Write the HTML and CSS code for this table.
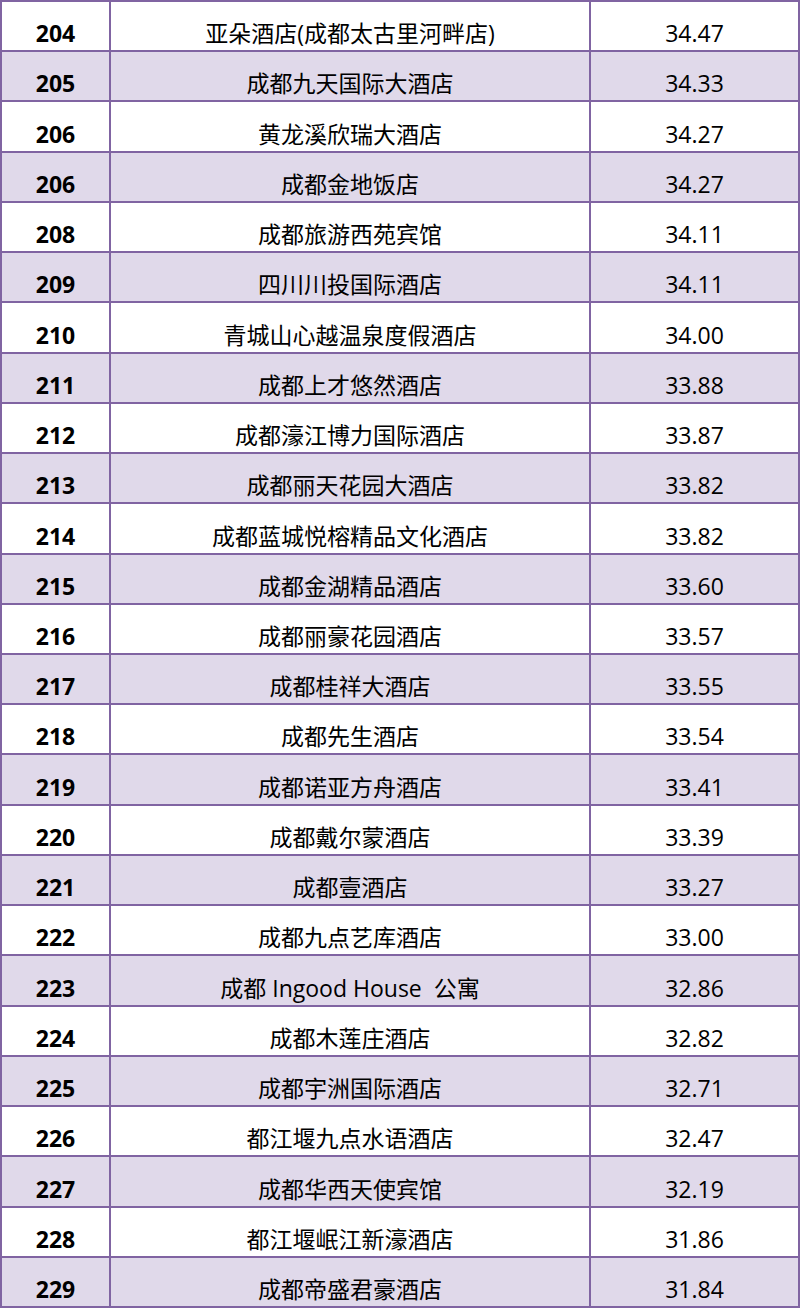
FILE: index.html
```html
<!DOCTYPE html>
<html lang="zh-CN">
<head>
<meta charset="utf-8">
<link rel="stylesheet" href="styles.css">
</head>
<body>
<div class="table">
  <div class="row"><div class="cell rank">204</div><div class="cell name">亚朵酒店(成都太古里河畔店)</div><div class="cell score">34.47</div></div>
  <div class="row shade"><div class="cell rank">205</div><div class="cell name">成都九天国际大酒店</div><div class="cell score">34.33</div></div>
  <div class="row"><div class="cell rank">206</div><div class="cell name">黄龙溪欣瑞大酒店</div><div class="cell score">34.27</div></div>
  <div class="row shade"><div class="cell rank">206</div><div class="cell name">成都金地饭店</div><div class="cell score">34.27</div></div>
  <div class="row"><div class="cell rank">208</div><div class="cell name">成都旅游西苑宾馆</div><div class="cell score">34.11</div></div>
  <div class="row shade"><div class="cell rank">209</div><div class="cell name">四川川投国际酒店</div><div class="cell score">34.11</div></div>
  <div class="row"><div class="cell rank">210</div><div class="cell name">青城山心越温泉度假酒店</div><div class="cell score">34.00</div></div>
  <div class="row shade"><div class="cell rank">211</div><div class="cell name">成都上才悠然酒店</div><div class="cell score">33.88</div></div>
  <div class="row"><div class="cell rank">212</div><div class="cell name">成都濠江博力国际酒店</div><div class="cell score">33.87</div></div>
  <div class="row shade"><div class="cell rank">213</div><div class="cell name">成都丽天花园大酒店</div><div class="cell score">33.82</div></div>
  <div class="row"><div class="cell rank">214</div><div class="cell name">成都蓝城悦榕精品文化酒店</div><div class="cell score">33.82</div></div>
  <div class="row shade"><div class="cell rank">215</div><div class="cell name">成都金湖精品酒店</div><div class="cell score">33.60</div></div>
  <div class="row"><div class="cell rank">216</div><div class="cell name">成都丽豪花园酒店</div><div class="cell score">33.57</div></div>
  <div class="row shade"><div class="cell rank">217</div><div class="cell name">成都桂祥大酒店</div><div class="cell score">33.55</div></div>
  <div class="row"><div class="cell rank">218</div><div class="cell name">成都先生酒店</div><div class="cell score">33.54</div></div>
  <div class="row shade"><div class="cell rank">219</div><div class="cell name">成都诺亚方舟酒店</div><div class="cell score">33.41</div></div>
  <div class="row"><div class="cell rank">220</div><div class="cell name">成都戴尔蒙酒店</div><div class="cell score">33.39</div></div>
  <div class="row shade"><div class="cell rank">221</div><div class="cell name">成都壹酒店</div><div class="cell score">33.27</div></div>
  <div class="row"><div class="cell rank">222</div><div class="cell name">成都九点艺库酒店</div><div class="cell score">33.00</div></div>
  <div class="row shade"><div class="cell rank">223</div><div class="cell name">成都 Ingood House&nbsp; 公寓</div><div class="cell score">32.86</div></div>
  <div class="row"><div class="cell rank">224</div><div class="cell name">成都木莲庄酒店</div><div class="cell score">32.82</div></div>
  <div class="row shade"><div class="cell rank">225</div><div class="cell name">成都宇洲国际酒店</div><div class="cell score">32.71</div></div>
  <div class="row"><div class="cell rank">226</div><div class="cell name">都江堰九点水语酒店</div><div class="cell score">32.47</div></div>
  <div class="row shade"><div class="cell rank">227</div><div class="cell name">成都华西天使宾馆</div><div class="cell score">32.19</div></div>
  <div class="row"><div class="cell rank">228</div><div class="cell name">都江堰岷江新濠酒店</div><div class="cell score">31.86</div></div>
  <div class="row shade"><div class="cell rank">229</div><div class="cell name">成都帝盛君豪酒店</div><div class="cell score">31.84</div></div>
</div>
</body>
</html>
```
FILE: styles.css
```css
* { box-sizing: border-box; }
html, body { margin: 0; padding: 0; background: #ffffff; }
.table {
  width: 800px;
  height: 1308px;
  display: grid;
  grid-template-rows: repeat(26, 1fr);
  border-top: 2px solid #8064a2;
  border-left: 2px solid #8064a2;
  font-family: "Open Sans", "Noto Sans CJK SC", sans-serif;
  font-size: 23px;
  color: #000;
}
.row {
  display: grid;
  grid-template-columns: 109px 480px 209px;
  background: #ffffff;
}
.row.shade { background: #e0d9ea; }
.cell {
  display: flex;
  justify-content: center;
  align-items: flex-end;
  padding-bottom: 5px;
  line-height: 1;
  border-right: 2px solid #8064a2;
  border-bottom: 2px solid #8064a2;
  white-space: nowrap;
}
.rank { font-weight: 700; }
```
